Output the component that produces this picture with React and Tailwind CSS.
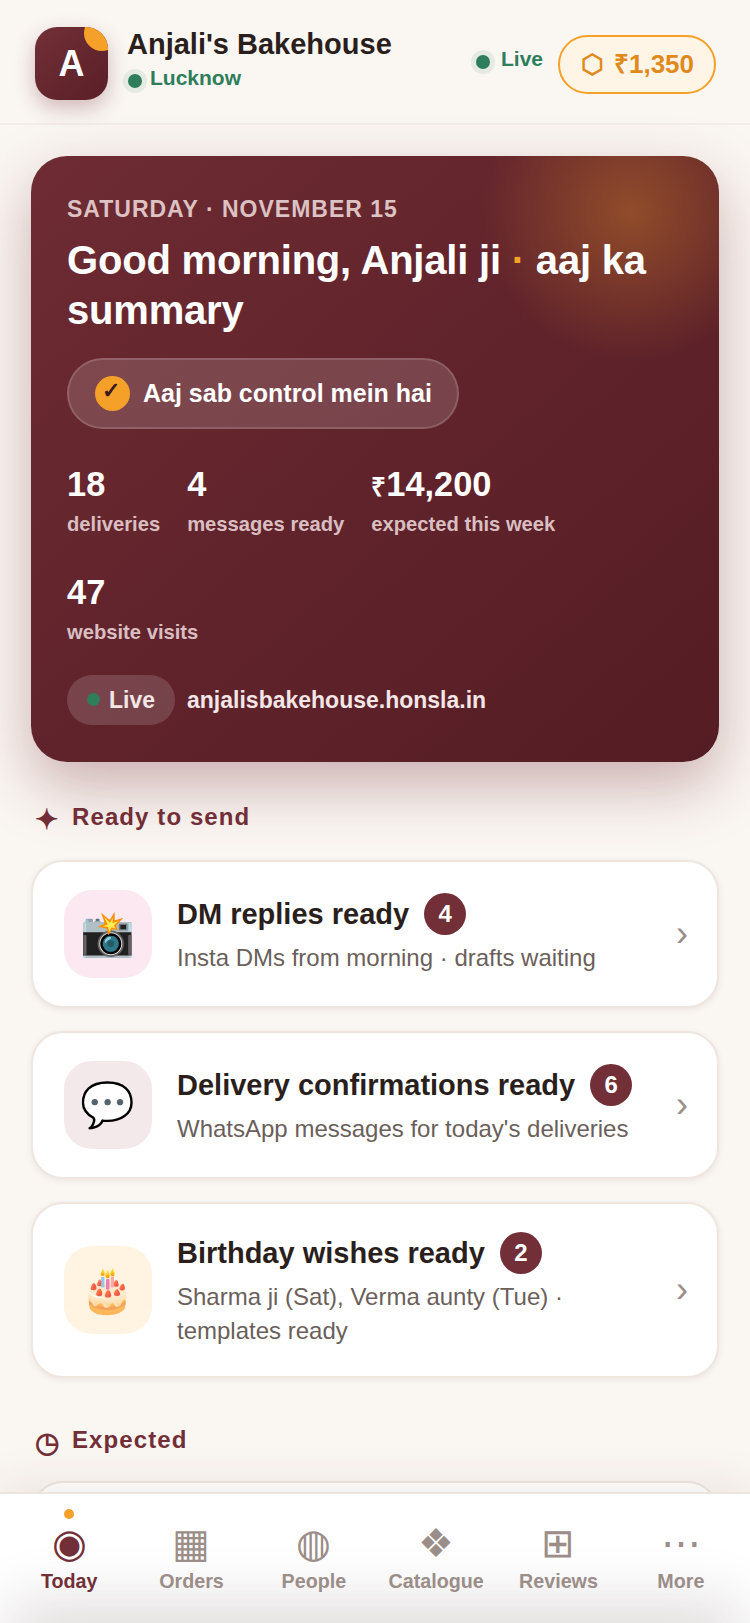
const FONT = "font-['Liberation_Sans','Noto_Color_Emoji',sans-serif]"

const stats = [
  { value: '18', label: 'deliveries' },
  { value: '4', label: 'messages ready' },
  { value: '14,200', label: 'expected this week', rupee: true },
  { value: '47', label: 'website visits' },
]

const readyItems = [
  { emoji: '📸', bg: 'bg-[#fbe8f1]', title: 'DM replies ready', count: 4, sub: 'Insta DMs from morning · drafts waiting' },
  { emoji: '💬', bg: 'bg-[#f3e8ea]', title: 'Delivery confirmations ready', count: 6, sub: "WhatsApp messages for today's deliveries" },
  { emoji: '🎂', bg: 'bg-[#fff3e2]', title: 'Birthday wishes ready', count: 2, sub: 'Sharma ji (Sat), Verma aunty (Tue) · templates ready' },
]

const navItems = [
  { glyph: '◉', label: 'Today', active: true },
  { glyph: '▦', label: 'Orders' },
  { glyph: '◍', label: 'People' },
  { glyph: '❖', label: 'Catalogue' },
  { glyph: '⊞', label: 'Reviews' },
  { glyph: '⋯', label: 'More' },
]

function Dot() {
  return <span className="w-[14px] h-[14px] rounded-full bg-[#2e7d5b] shadow-[0_0_0_5px_rgba(46,125,91,0.1)] shrink-0" />
}

function Header() {
  return (
    <header className="h-[125px] border-b-2 border-[#f3ede8] pl-[35px] pr-[34px] flex items-center">
      <div className="relative w-[73px] h-[73px] mt-[4px] rounded-[22px] bg-gradient-to-br from-[#722f37] to-[#5a1f27] shadow-[0_8px_20px_rgba(114,47,55,0.3)] overflow-hidden flex items-center justify-center shrink-0">
        <span className="text-white text-[36px] font-bold">A</span>
        <span className="absolute -top-[12px] -right-[12px] w-[36px] h-[36px] rounded-full bg-[#f5a028]" />
      </div>
      <div className="ml-[19px] mb-[6px]">
        <div className="text-[29px] leading-[36px] font-bold text-[#2a1f1d]">Anjali's Bakehouse</div>
        <div className="flex items-center gap-[8px] ml-[1px] mt-[8px]">
          <Dot />
          <span className="text-[21px] leading-[28px] font-bold text-[#2e7d5b] -mt-[6px]">Lucknow</span>
        </div>
      </div>
      <div className="ml-auto flex items-center gap-[11px] mt-[1px]">
        <Dot />
        <span className="text-[21px] leading-[28px] font-bold text-[#2e7d5b] -mt-[6px]">Live</span>
      </div>
      <div className="ml-[15px] mt-[5px] h-[59px] w-[158px] rounded-full border-2 border-[#f5a028] bg-[#fff5e6] flex items-center justify-center gap-[10px] text-[#e08a1e] font-bold">
        <span className="text-[26px] leading-none ml-[1px]">⬡</span>
        <span className="text-[26px] leading-none">₹1,350</span>
      </div>
    </header>
  )
}

function HeroCard() {
  return (
    <section className="relative mx-[31px] mt-[31px] h-[606px] rounded-[36px] px-[36px] pt-[36px] overflow-hidden bg-gradient-to-br from-[#6e2b33] to-[#541c24] shadow-[0_24px_60px_rgba(114,47,55,0.35)]">
      <div className="absolute -top-[94px] -right-[62px] w-[300px] h-[300px] rounded-full bg-[radial-gradient(circle,rgba(245,160,40,0.32),rgba(245,160,40,0)_70%)]" />
      <div className="relative">
        <div className="text-[23px] leading-[34px] font-bold tracking-[1px] text-[#dcc2c3]">SATURDAY · NOVEMBER 15</div>
        <h1 className="mt-[9px] text-[40px] leading-[50.4px] font-bold text-white tracking-[-0.2px]">
          Good morning, Anjali ji <span className="text-[#f5a028]">·</span> aaj ka summary
        </h1>
        <div className="mt-[22px] inline-flex items-center h-[71px] pl-[26px] pr-[25px] rounded-full bg-white/15 border-2 border-white/15">
          <span className="w-[35px] h-[35px] rounded-full bg-[#f5a028] text-[#3a1a1e] flex items-center justify-center text-[22px] font-bold">
            <span className="-mt-[6px] -ml-[3px]">✓</span>
          </span>
          <span className="ml-[13px] text-[25px] font-bold text-white">Aaj sab control mein hai</span>
        </div>
        <div className="mt-[33px] flex flex-wrap gap-x-[27px] gap-y-[32px]">
          {stats.map((s) => (
            <div key={s.label}>
              <div className="text-[34.4px] leading-[44px] font-bold text-white">
                {s.rupee && <span className="text-[26px] leading-none">₹</span>}{s.value}
              </div>
              <div className="mt-[5px] text-[20.2px] leading-[27px] font-bold text-[#d9bfc1]">{s.label}</div>
            </div>
          ))}
        </div>
        <div className="mt-[29px] flex items-center gap-[12px]">
          <span className="inline-flex items-center gap-[9px] h-[50px] px-[20px] rounded-full bg-white/15">
            <span className="w-[13px] h-[13px] rounded-full bg-[#2e7d5b]" />
            <span className="text-[23px] font-bold text-[#f3e6e6]">Live</span>
          </span>
          <span className="text-[23px] font-bold text-[#f3e6e6]">anjalisbakehouse.honsla.in</span>
        </div>
      </div>
    </section>
  )
}

function SectionTitle({ glyph, children }) {
  return (
    <div className="flex items-center pl-[35px] text-[#722f37] font-bold">
      <span className="w-[37px] text-[28px] leading-[34px] mt-[6px]">{glyph}</span>
      <span className="text-[24px] leading-[34px] tracking-[1.1px]">{children}</span>
    </div>
  )
}

function ReadyCard({ item }) {
  return (
    <div className="mx-[31px] rounded-[32px] border-2 border-[#eee6df] bg-white shadow-[0_2px_6px_rgba(80,50,40,0.08)] pl-[31px] pr-[29px] py-[28px] flex items-center">
      <div className={`w-[88px] h-[88px] rounded-[28px] ${item.bg} flex items-center justify-center text-[44px] shrink-0`}>{item.emoji}</div>
      <div className="ml-[25px] flex-1 min-w-0">
        <div className="flex items-center gap-[15px]">
          <span className="text-[29px] leading-[42px] font-bold text-[#2a1f1d]">{item.title}</span>
          <span className="w-[42px] h-[42px] rounded-full bg-[#722f37] text-white text-[24px] font-bold flex items-center justify-center">{item.count}</span>
        </div>
        <div className="mt-[6px] text-[24px] leading-[34px] text-[#6b5f5b]">{item.sub}</div>
      </div>
      <span className="ml-[24px] text-[36px] leading-none text-[#9b8d88] shrink-0">›</span>
    </div>
  )
}

function BottomNav() {
  return (
    <nav className="absolute left-0 right-0 bottom-0 h-[131px] bg-white border-t-2 border-[#ece4de] shadow-[0_-10px_40px_rgba(80,50,40,0.08)]">
      <div className="absolute inset-0 overflow-hidden">
        <div className="absolute left-[30px] right-[30px] -bottom-[40px] h-[40px] shadow-[0_0_60px_20px_rgba(60,40,40,0.16)]" />
      </div>
      <div className="relative grid grid-cols-6 px-[8px]">
        {navItems.map((n) => (
          <div key={n.label} className="relative flex flex-col items-center pt-[24px]">
            {n.active && <span className="absolute top-[15px] w-[10px] h-[10px] rounded-full bg-[#f5a028]" />}
            <span className={`text-[40px] leading-[50px] ${n.active ? 'text-[#722f37]' : 'text-[#9b8d88]'}`}>{n.glyph}</span>
            <span className={`text-[19.7px] leading-[26px] font-bold ${n.active ? 'text-[#722f37]' : 'text-[#9b8d88]'}`}>{n.label}</span>
          </div>
        ))}
      </div>
    </nav>
  )
}

export default function App() {
  return (
    <div className={`relative w-[750px] h-[1623px] overflow-hidden bg-[#faf6f2] ${FONT}`}>
      <Header />
      <HeroCard />
      <div className="mt-[35px]">
        <SectionTitle glyph="✦">Ready to send</SectionTitle>
      </div>
      <div className="mt-[23px] flex flex-col gap-[23px]">
        {readyItems.map((item) => <ReadyCard key={item.title} item={item} />)}
      </div>
      <div className="mt-[42px]">
        <SectionTitle glyph="◷">Expected</SectionTitle>
      </div>
      <div className="mt-[21px] mx-[31px] h-[100px] rounded-[32px] border-2 border-[#eee6df] bg-white" />
      <BottomNav />
    </div>
  )
}
